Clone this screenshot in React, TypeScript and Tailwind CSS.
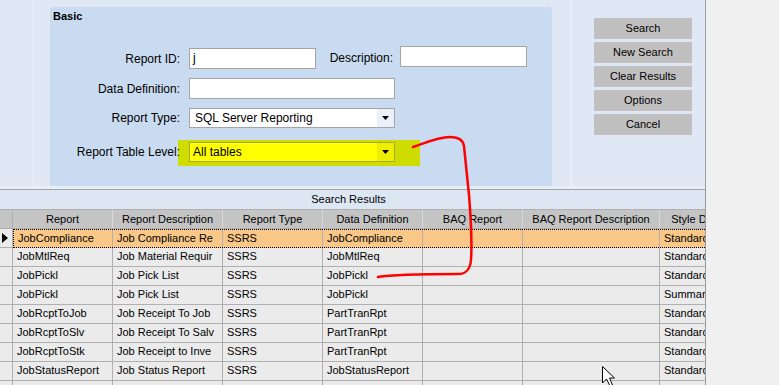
import React from "react";

const cols = [
  { w: 100, h: "Report" },
  { w: 110, h: "Report Description" },
  { w: 100, h: "Report Type" },
  { w: 100, h: "Data Definition" },
  { w: 100, h: "BAQ Report" },
  { w: 137, h: "BAQ Report Description" },
  { w: 106, h: "Style Description" },
];

const rows: string[][] = [
  ["JobCompliance", "Job Compliance Re", "SSRS", "JobCompliance", "", "", "Standard"],
  ["JobMtlReq", "Job Material Requir", "SSRS", "JobMtlReq", "", "", "Standard"],
  ["JobPickl", "Job Pick List", "SSRS", "JobPickl", "", "", "Standard"],
  ["JobPickl", "Job Pick List", "SSRS", "JobPickl", "", "", "Summary"],
  ["JobRcptToJob", "Job Receipt To Job", "SSRS", "PartTranRpt", "", "", "Standard"],
  ["JobRcptToSlv", "Job Receipt To Salv", "SSRS", "PartTranRpt", "", "", "Standard"],
  ["JobRcptToStk", "Job Receipt to Inve", "SSRS", "PartTranRpt", "", "", "Standard"],
  ["JobStatusReport", "Job Status Report", "SSRS", "JobStatusReport", "", "", "Standard"],
  ["JobTravelr", "Job Traveler", "SSRS", "JobTravelr", "", "", "Standard"],
];

function Caret() {
  return (
    <svg width="7" height="4" viewBox="0 0 7 4">
      <path d="M0 0 H7 L3.5 4 Z" fill="#000" />
    </svg>
  );
}

export default function App() {
  return (
    <div
      className="relative w-[779px] h-[385px] overflow-hidden flex bg-[#f0f0f0] text-black"
      style={{ fontFamily: '"Liberation Sans", Arial, sans-serif' }}
    >
      <div className="w-[706px] h-full flex flex-col border-r border-[#9a9a9a] bg-[#dfe8f4]">
        {/* top search area */}
        <div className="h-[186px] flex shrink-0">
          <div className="w-[34px] h-full border-r border-[#edf2f9]" />
          <div className="ml-[16px] mt-[7px] w-[502px] h-[179px] bg-[#c9dbf0] rounded-t-[3px] flex flex-col">
            <div className="pl-[3px] pt-[2px] h-[16px] text-[11px] leading-[14px] font-bold">Basic</div>
            {/* row 1 */}
            <div className="mt-[25px] flex items-center h-[21px]">
              <div className="w-[130px] text-right text-[12px]">Report ID:</div>
              <div className="ml-[9px] w-[127px] h-[21px] bg-white border border-[#a5a5a5] text-[12px] leading-[19px] pl-[3px]">j</div>
              <div className="ml-[4px] w-[73px] text-right text-[12px] -mt-[2px]">Description:</div>
              <div className="ml-[7px] -mt-[4px] w-[127px] h-[21px] bg-white border border-[#a5a5a5]" />
            </div>
            {/* row 2 */}
            <div className="mt-[9px] flex items-center h-[21px]">
              <div className="w-[130px] text-right text-[12px]">Data Definition:</div>
              <div className="ml-[9px] w-[206px] h-[21px] bg-white border border-[#a5a5a5]" />
            </div>
            {/* row 3 */}
            <div className="mt-[9px] flex items-center h-[20px]">
              <div className="w-[130px] text-right text-[12px]">Report Type:</div>
              <div className="ml-[9px] w-[206px] h-[20px] bg-white border border-[#a5a5a5] flex">
                <div className="flex-1 text-[12px] leading-[18px] pl-[5px]">SQL Server Reporting</div>
                <div className="w-[17px] h-full bg-[#e9f0fa] flex items-center justify-center">
                  <Caret />
                </div>
              </div>
            </div>
            {/* row 4 */}
            <div className="mt-[14px] flex items-center h-[20px]">
              <div className="relative z-10 w-[130px] text-right text-[12px]">Report Table Level:</div>
              <div className="relative ml-[9px] w-[206px] h-[20px]">
                <div className="absolute left-[-11px] top-[-2px] w-[242px] h-[26px] bg-[#cfdc00]" />
                <div className="absolute inset-0 bg-[#ffff00] border border-[#a8a838] flex">
                  <div className="flex-1 text-[12px] leading-[18px] pl-[3px]">All tables</div>
                  <div className="w-[17px] h-full bg-[#eeee00] flex items-center justify-center">
                    <Caret />
                  </div>
                </div>
              </div>
            </div>
          </div>
          <div className="ml-[19px] w-[1px] h-full bg-[#edf2f9]" />
          <div className="ml-[22px] mt-[18px] flex flex-col gap-[3px]">
            {["Search", "New Search", "Clear Results", "Options", "Cancel"].map((b) => (
              <div key={b} className="w-[98px] h-[21px] bg-[#c0c0c0] text-[11px] leading-[21px] text-center">
                {b}
              </div>
            ))}
          </div>
        </div>
        <div className="h-[3px] bg-[#e9eff7] shrink-0" />
        <div className="h-[1px] bg-[#a3a3a3] shrink-0" />
        {/* Search results */}
        <div className="h-[19px] shrink-0 text-[11px] leading-[19px] text-center pr-[8px] bg-[#dde7f4]">Search Results</div>
        <div className="flex-1 overflow-hidden bg-[#ebebeb]">
          <div className="flex h-[20px] bg-[#c4c4c4] border-y border-[#b0b0b0] text-[11px] leading-[18px] whitespace-nowrap">
            <div className="w-[13px] shrink-0 border-r border-[#b0b0b0]" />
            {cols.map((c) => (
              <div
                key={c.h}
                className="shrink-0 border-r border-[#dadada] text-center overflow-hidden"
                style={{ width: c.w }}
              >
                {c.h}
              </div>
            ))}
          </div>
          {rows.map((r, i) => {
            const sel = i === 0;
            return (
              <div key={i} className="flex h-[19px] text-[11px] leading-[17px] whitespace-nowrap">
                <div className="w-[13px] shrink-0 border-r border-b border-[#b0b0b0] flex items-center pl-[2px]">
                  {sel && (
                    <svg width="6" height="10" viewBox="0 0 6 10">
                      <path d="M0 0 L6 5 L0 10 Z" fill="#000" />
                    </svg>
                  )}
                </div>
                <div
                  className={
                    sel
                      ? "flex bg-[#f9c787] border border-dotted border-black"
                      : "flex border-b border-[#b0b0b0]"
                  }
                >
                  {cols.map((c, j) => (
                    <div
                      key={j}
                      className={
                        "shrink-0 overflow-hidden pl-[4px] " +
                        (j < cols.length - 1 ? "border-r border-[#b0b0b0]" : "")
                      }
                      style={{ width: sel && j === 0 ? c.w - 1 : c.w }}
                    >
                      {r[j]}
                    </div>
                  ))}
                </div>
              </div>
            );
          })}
        </div>
      </div>
      <div className="flex-1" />

      {/* red annotation overlay */}
      <svg className="absolute left-0 top-0 pointer-events-none" width="779" height="385" viewBox="0 0 779 385">
        <path
          d="M413 147 C 425 143, 438 137, 450 137 C 458 137, 463 139, 464 146 L 469 195 C 471 220, 472 245, 471 260 C 470 270, 466 274, 458 274 C 430 274, 395 274, 378 277"
          fill="none"
          stroke="#ff0000"
          strokeWidth="2.5"
          strokeLinecap="round"
          strokeLinejoin="round"
        />
        <path
          d="M602.5 366.5 L602.5 383 L606.5 379 L610 386 L612.5 385 L609.5 378 L614.5 378 Z"
          fill="#fff"
          stroke="#000"
          strokeWidth="1"
        />
      </svg>
    </div>
  );
}
